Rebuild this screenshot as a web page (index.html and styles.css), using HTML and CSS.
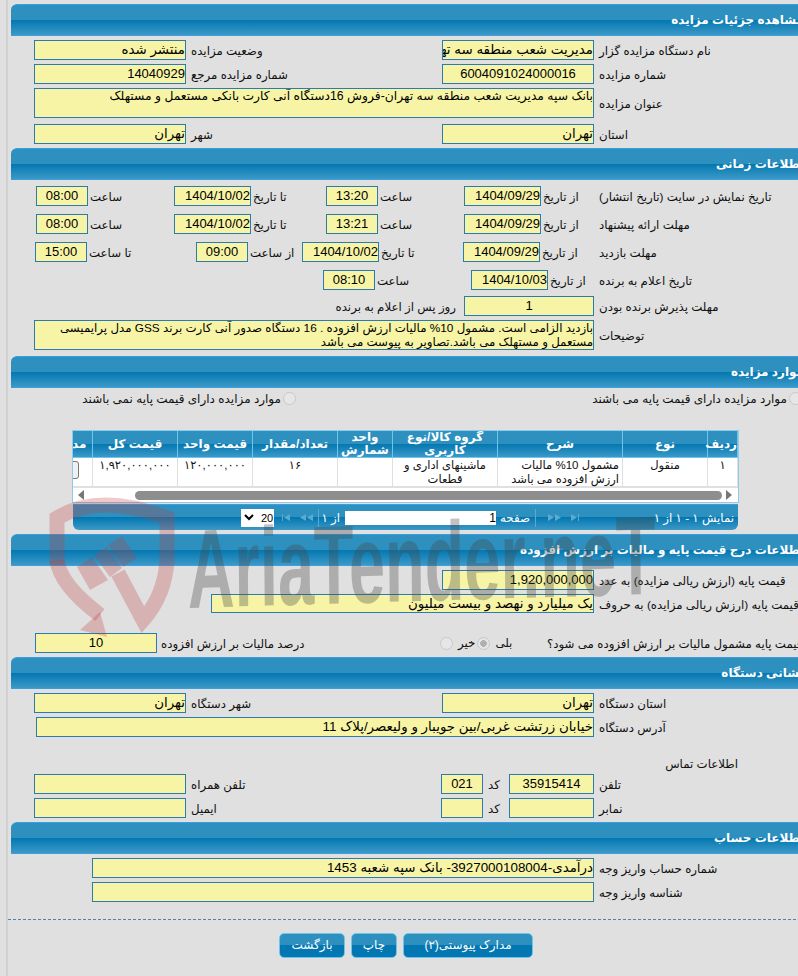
FILE: index.html
```html
<!DOCTYPE html>
<html lang="fa" dir="rtl">
<head>
    <meta charset="UTF-8">
    <meta name="viewport" content="width=device-width, initial-scale=1.0">
    <title>مشاهده جزئیات مزایده</title>
    <link rel="stylesheet" href="styles.css">
</head>
<body>
    <div class="page">
        <h2 class="sec-head">مشاهده جزئیات مزایده</h2>
        <div class="sec-body pad-4">
            <div class="row row-2">
                <div class="box">منتشر شده</div><div class="lbl">وضعیت مزایده</div>
                <div class="box">مدیریت شعب منطقه سه تهران</div><div class="lbl">نام دستگاه مزایده گزار</div>
            </div>
            <div class="row row-2">
                <div class="box num">14040929</div><div class="lbl">شماره مزایده مرجع</div>
                <div class="box num center">6004091024000016</div><div class="lbl">شماره مزایده</div>
            </div>
            <div class="row row-single from-34">
                <div class="box tall">بانک سپه مدیریت شعب منطقه سه تهران-فروش 16دستگاه آنی کارت بانکی مستعمل و مستهلک</div><div class="lbl">عنوان مزایده</div>
            </div>
            <div class="row row-2 mt-6">
                <div class="box">تهران</div><div class="lbl">شهر</div>
                <div class="box">تهران</div><div class="lbl">استان</div>
            </div>
        </div>

        <h2 class="sec-head">اطلاعات زمانی</h2>
        <div class="sec-body pad-6">
            <div class="row row-time">
                <div class="box num center">08:00</div><div class="lbl">ساعت</div>
                <div class="box num">1404/10/02</div><div class="lbl">تا تاریخ</div>
                <div class="box num center">13:20</div><div class="lbl">ساعت</div>
                <div class="box num">1404/09/29</div><div class="lbl">از تاریخ</div>
                <div class="lbl">تاریخ نمایش در سایت (تاریخ انتشار)</div>
            </div>
            <div class="row row-time mt-8">
                <div class="box num center">08:00</div><div class="lbl">ساعت</div>
                <div class="box num">1404/10/02</div><div class="lbl">تا تاریخ</div>
                <div class="box num center">13:21</div><div class="lbl">ساعت</div>
                <div class="box num">1404/09/29</div><div class="lbl">از تاریخ</div>
                <div class="lbl">مهلت ارائه پیشنهاد</div>
            </div>
            <div class="row row-visit mt-8">
                <div class="box num center">15:00</div><div class="lbl">تا ساعت</div>
                <div class="box num center">09:00</div><div class="lbl">از ساعت</div>
                <div class="box num">1404/10/02</div><div class="lbl">تا تاریخ</div>
                <div class="box num">1404/09/29</div><div class="lbl">از تاریخ</div>
                <div class="lbl">مهلت بازدید</div>
            </div>
            <div class="row row-winner mt-8">
                <div class="box num center">08:10</div><div class="lbl">ساعت</div>
                <div class="box num">1404/10/03</div><div class="lbl">از تاریخ</div>
                <div class="lbl">تاریخ اعلام به برنده</div>
            </div>
            <div class="row row-accept mt-6">
                <div class="lbl to-right">روز پس از اعلام به برنده</div>
                <div class="box num center">1</div>
                <div class="lbl">مهلت پذیرش برنده بودن</div>
            </div>
            <div class="row row-single from-34 mt-4">
                <div class="box tall notes">بازدید الزامی است. مشمول 10% مالیات ارزش افزوده . 16 دستگاه صدور آنی کارت برند GSS مدل پرایمیسی<br>مستعمل و مستهلک می باشد.تصاویر به پیوست می باشد</div><div class="lbl">توضیحات</div>
            </div>
        </div>

        <h2 class="sec-head">موارد مزایده</h2>
        <div class="sec-body pad-4">
            <div class="row-radios">
                <div class="radio-opt"><span>موارد مزایده دارای قیمت پایه نمی باشند</span><i class="radio"></i></div>
                <div class="radio-opt"><span>موارد مزایده دارای قیمت پایه می باشند</span><i class="radio"></i></div>
            </div>
            <div class="grid-box">
                <div class="grid-wrap">
                    <table class="grid">
                        <thead>
                            <tr>
                                <th>ردیف</th><th>نوع</th><th>شرح</th><th>گروه کالا/نوع کاربری</th><th>واحد شمارش</th><th>تعداد/مقدار</th><th>قیمت واحد</th><th>قیمت کل</th><th>مدارک</th>
                            </tr>
                        </thead>
                        <tbody>
                            <tr>
                                <td>۱</td><td>منقول</td><td class="desc">مشمول 10% مالیات ارزش افزوده می باشد</td><td>ماشینهای اداری و قطعات</td><td></td><td>۱۶</td><td>۱۲۰,۰۰۰,۰۰۰</td><td>۱,۹۲۰,۰۰۰,۰۰۰</td><td><span class="mini-btn">جزئیات</span></td>
                            </tr>
                        </tbody>
                    </table>
                </div>
                <div class="hscroll">
                    <svg class="arrow" width="6" height="10" viewBox="0 0 6 10"><polygon points="6,0 6,10 0,5"/></svg>
                    <div class="thumb"></div>
                    <svg class="arrow" width="6" height="10" viewBox="0 0 6 10"><polygon points="0,0 0,10 6,5"/></svg>
                </div>
            </div>
            <div class="pager">
                <div class="page-size">
                    <svg width="10" height="7" viewBox="0 0 10 7"><path d="M1 1l4 4 4-4" fill="none" stroke="#000" stroke-width="2"/></svg>
                    <span>20</span>
                </div>
                <svg class="pg-icon" width="12" height="7" viewBox="0 0 12 7"><path d="M1 0v7h1V0zM9 0v7L3 3.500z"/></svg>
                <svg class="pg-icon" width="13" height="7" viewBox="0 0 13 7"><path d="M6 0v7L0 3.500zM13 0v7L7 3.500z"/></svg>
                <span class="pg-sep"></span>
                <span class="pg-text of">از ۱</span>
                <div class="pg-input">1</div>
                <span class="pg-text">صفحه</span>
                <span class="pg-sep"></span>
                <svg class="pg-icon" width="13" height="7" viewBox="0 0 13 7"><path d="M0 0v7l6-3.500zM7 0v7l6-3.500z"/></svg>
                <svg class="pg-icon" width="12" height="7" viewBox="0 0 12 7"><path d="M3 0v7l6-3.500zM10 0v7h1V0z"/></svg>
                <span class="pg-text pg-info">نمایش ۱ - ۱ از ۱</span>
            </div>
        </div>

        <h2 class="sec-head">اطلاعات درج قیمت پایه و مالیات بر ارزش افزوده</h2>
        <div class="sec-body pad-4">
            <div class="row row-single from-442">
                <div class="box num">1,920,000,000</div><div class="lbl">قیمت پایه (ارزش ریالی مزایده) به عدد</div>
            </div>
            <div class="row row-single from-211 short">
                <div class="box">یک میلیارد و نهصد و بیست میلیون</div><div class="lbl">قیمت پایه (ارزش ریالی مزایده) به حروف</div>
            </div>
            <div class="row row-tax">
                <div class="box num center">10</div>
                <div class="lbl">درصد مالیات بر ارزش افزوده</div>
                <div class="tax-radios">
                    <i class="radio"></i><span>خیر</span><i class="radio on"></i><span>بلی</span>
                </div>
                <div class="lbl">قیمت پایه مشمول مالیات بر ارزش افزوده می شود؟</div>
            </div>
        </div>

        <h2 class="sec-head">نشانی دستگاه</h2>
        <div class="sec-body pad-4">
            <div class="row row-2">
                <div class="box">تهران</div><div class="lbl">شهر دستگاه</div>
                <div class="box">تهران</div><div class="lbl">استان دستگاه</div>
            </div>
            <div class="row row-single from-36">
                <div class="box">خیابان زرتشت غربی/بین جویبار و ولیعصر/پلاک 11</div><div class="lbl">آدرس دستگاه</div>
            </div>
            <div class="contact-title">اطلاعات تماس</div>
            <div class="row row-contact">
                <div class="box"></div><div class="lbl">تلفن همراه</div>
                <div class="box num center">021</div><div class="lbl">کد</div>
                <div class="box num center">35915414</div><div class="lbl">تلفن</div>
            </div>
            <div class="row row-contact">
                <div class="box"></div><div class="lbl">ایمیل</div>
                <div class="box"></div><div class="lbl">کد</div>
                <div class="box"></div><div class="lbl">نمابر</div>
            </div>
        </div>

        <h2 class="sec-head">اطلاعات حساب</h2>
        <div class="sec-body pad-4">
            <div class="row row-single from-92">
                <div class="box">درآمدی-3927000108004- بانک سپه شعبه 1453</div><div class="lbl">شماره حساب واریز وجه</div>
            </div>
            <div class="row row-single from-92">
                <div class="box"></div><div class="lbl">شناسه واریز وجه</div>
            </div>
        </div>

        <div class="actions">
            <a class="btn btn-back">بازگشت</a>
            <a class="btn btn-print">چاپ</a>
            <a class="btn btn-docs">مدارک پیوستی(۲)</a>
        </div>
    </div>

    <!-- watermark sits over the whole form -->
    <div class="watermark">
        <svg class="wm-logo" width="150" height="150" viewBox="0 0 150 150">
            <path class="wm-band" d="M17 75V28Q60 2 127 28V70Q125 105 103 130L78 83"/>
            <path class="wm-band" d="M17 70Q20 95 60 125"/>
            <polygon class="wm-fill" points="60,122 67,147 40,140"/>
            <polygon class="wm-fill" points="37,77 52,67 68,90 50,100"/>
            <polygon class="wm-fill" points="54,65 67,57 82,78 70,87"/>
            <polygon class="wm-fill" points="68,55 82,46 97,68 83,77"/>
        </svg>
        <span class="wm-text">AriaTender.neT</span>
    </div>
</body>
</html>
```

FILE: styles.css
```css
:root {
    --bg: #e0e0e0;
    --box: #f7f5a5;
    --box-border: #2a7cb0;
    --head-top: #2e90bf;
    --head-mid: #0377b1;
    --head-end: #3c99c7;
    --head-line: #3a9ee0;
    --light-line: #6cc5ec;
}

html {
    overflow: hidden;
}

body {
    direction: ltr;
    margin: 0;
    height: 976px;
    overflow: hidden;
    position: relative;
    background: var(--bg);
    color: #111;
    font-family: "Liberation Sans", "DejaVu Sans", sans-serif;
    font-size: 11.8px;
}

.page {
    box-sizing: border-box;
    width: 805px;
    min-height: 976px;
    margin-left: 6px;
    padding: 4px 0 0 3px;
    border-left: 2px solid #d0d0d0;
}

.sec-head {
    direction: rtl;
    height: 32px;
    box-sizing: border-box;
    margin: 0;
    padding: 0 7px 0 0;
    border-top: 1px solid var(--head-line);
    border-bottom: 1px solid var(--head-line);
    border-radius: 6px 6px 0 0;
    background: linear-gradient(var(--head-top) 50%, var(--head-mid) 50%, var(--head-end));
    color: #fff;
    font-size: 12px;
    font-weight: bold;
    line-height: 30px;
    white-space: nowrap;
}

.sec-body {
    padding-bottom: 4px;
}

.pad-4 { padding-top: 4px; }
.pad-6 { padding-top: 6px; padding-bottom: 6px; }
.mt-4 { margin-top: 4px !important; }
.mt-6 { margin-top: 6px !important; }
.mt-8 { margin-top: 8px !important; }

.row {
    display: grid;
    align-items: center;
    height: 20px;
    white-space: nowrap;
}

.row + .row {
    margin-top: 4px;
}

.box {
    direction: rtl;
    box-sizing: border-box;
    height: 20px;
    overflow: hidden;
    border: 1px solid var(--box-border);
    background: var(--box);
    color: #000;
    font-size: 13.4px;
    line-height: 18px;
    white-space: nowrap;
}

.box.num {
    font-size: 13px;
}

.box.center {
    text-align: center;
}

.box.tall {
    height: 30px;
    font-size: 12.3px;
    line-height: 14px;
}

.box.notes {
    font-size: 11.8px;
}

.row:has(.tall) {
    height: 30px;
}

.lbl {
    direction: rtl;
    padding: 2px 0 0 5px;
    text-align: left;
    white-space: nowrap;
}

.lbl.to-right {
    padding: 2px 8px 0 0;
    text-align: right;
}

.row-2 {
    grid-template-columns: 152px 256px 152px 1fr;
    padding-left: 23px;
}

.row-single {
    grid-template-columns: 1fr 217px;
}

.row-single.short,
.row-single.short .box {
    height: 19px;
}

.row-single.short .box {
    line-height: 17px;
}

.from-34 { padding-left: 23px; }
.from-36 { padding-left: 25px; }
.from-92 { padding-left: 81px; }
.from-211 { padding-left: 200px; }
.from-442 { padding-left: 431px; }

.row-time {
    grid-template-columns: 52px 86px 77px 75px 52px 86px 77px 58px 1fr;
    padding-left: 25px;
}

.row-time .lbl,
.row-visit .lbl,
.row-winner .lbl {
    padding-left: 2px;
}

.row-time .lbl:last-child,
.row-visit .lbl:last-child,
.row-winner .lbl:last-child {
    padding-left: 0;
}

.row-visit {
    grid-template-columns: 52px 109px 52px 54px 77px 84px 77px 59px 1fr;
    padding-left: 24px;
}

.row-winner {
    grid-template-columns: 52px 96px 77px 51px 1fr;
    padding-left: 312px;
}

.row-accept {
    grid-template-columns: 453px 130px 1fr;
}

.row-radios {
    display: grid;
    grid-template-columns: 285px 506px;
    height: 38px;
    font-size: 12px;
}

.radio-opt {
    display: flex;
    justify-content: flex-end;
    gap: 2px;
    height: 14px;
    line-height: 15px;
    white-space: nowrap;
}

.radio-opt span {
    direction: rtl;
}

.radio {
    display: inline-block;
    flex: none;
    box-sizing: border-box;
    width: 13px;
    height: 13px;
    border: 1px solid #c8c8c8;
    border-radius: 50%;
    background: #e6e6e6;
}

.radio.on {
    background: radial-gradient(#b0b0b0 40%, #e6e6e6 45%);
}

.grid-box {
    width: 667px;
    box-sizing: border-box;
    margin-left: 61px;
    border: 1px solid #8ccbee;
    background: #fff;
}

.grid-wrap {
    direction: rtl;
    overflow: hidden;
}

.grid {
    table-layout: fixed;
    width: 695px;
    border-collapse: collapse;
}

.grid th {
    box-sizing: border-box;
    height: 26px;
    padding: 0;
    border: 1px solid var(--light-line);
    border-top: 0;
    background: linear-gradient(var(--head-top) 50%, var(--head-mid) 50%, var(--head-end));
    color: #fff;
    font-size: 12px;
    font-weight: bold;
    line-height: 13px;
}

.grid td {
    height: 28px;
    padding: 0 2px;
    box-sizing: border-box;
    border: 1px solid #e0e0e0;
    border-top: 0;
    font-size: 11.5px;
    line-height: 14px;
    text-align: center;
    vertical-align: top;
}

.grid th:nth-child(1) { width: 30px; }
.grid th:nth-child(2) { width: 85px; }
.grid th:nth-child(3) { width: 125px; }
.grid th:nth-child(4) { width: 105px; }
.grid th:nth-child(5) { width: 55px; }
.grid th:nth-child(6) { width: 85px; }
.grid th:nth-child(7) { width: 75px; }
.grid th:nth-child(8) { width: 85px; }
.grid th:nth-child(9) { width: 50px; }

.grid td.desc {
    padding-right: 3px;
    text-align: right;
}

.mini-btn {
    display: block;
    box-sizing: border-box;
    width: 46px;
    height: 18px;
    margin: 3px 11px 0 0;
    border: 1px solid #777;
    border-radius: 3px;
    background: #f0f0f0;
    line-height: 16px;
    white-space: nowrap;
}

.hscroll {
    display: flex;
    align-items: center;
    gap: 4px;
    box-sizing: border-box;
    height: 15px;
    padding: 0 6px 0 5px;
    border-top: 1px solid #e0e0e0;
}

.arrow {
    flex: none;
    fill: #777;
}

.thumb {
    height: 9px;
    margin: 0 0 0 47px;
    flex: 1;
    border-radius: 5px;
    background: #8e8e8e;
}

.pager {
    display: flex;
    align-items: center;
    box-sizing: border-box;
    width: 665px;
    height: 26px;
    margin: 1px 0 0 62px;
    padding-left: 168px;
    border-top: 1px solid var(--head-line);
    border-radius: 0 0 6px 6px;
    background: linear-gradient(var(--head-top) 50%, var(--head-mid) 50%, var(--head-end));
    color: #fff;
}

.page-size {
    display: flex;
    align-items: center;
    gap: 7px;
    box-sizing: border-box;
    width: 33px;
    height: 18px;
    padding-left: 3px;
    background: #fff;
    color: #000;
    font-size: 11px;
}

.pg-icon {
    flex: none;
    margin-left: 7px;
    fill: #5aaad2;
}

.pg-sep {
    width: 1px;
    height: 18px;
    margin: 0 5px;
    background: #5aaad2;
}

.pg-text {
    direction: rtl;
    white-space: nowrap;
}

.pg-text.of {
    width: 16px;
    margin-right: 5px;
}

.pg-input {
    direction: rtl;
    box-sizing: border-box;
    width: 151px;
    height: 14px;
    margin-right: 4px;
    background: #fff;
    color: #000;
    font-size: 12px;
    line-height: 14px;
}

.pg-info {
    margin-left: auto;
    margin-right: 4px;
}

.row-tax {
    grid-template-columns: 122px 283px 107px 1fr;
    padding-left: 24px;
    margin-top: 20px !important;
}

.row-tax .lbl {
    padding-left: 4px;
}

.row-tax .lbl:last-child {
    padding-left: 0;
}

.tax-radios {
    display: flex;
    align-items: center;
}

.tax-radios span {
    direction: rtl;
    margin: 0 2px 0 5px;
}

.contact-title {
    direction: rtl;
    width: 72px;
    height: 17px;
    margin: 19px 0 1px 655px;
    line-height: 17px;
    white-space: nowrap;
    text-align: left;
}

.row-contact {
    grid-template-columns: 152px 255px 42px 26px 85px 1fr;
    padding-left: 23px;
}

.actions {
    display: flex;
    justify-content: flex-start;
    gap: 6px;
    margin: 13px 0 0 -3px;
    padding: 13px 0 0 271px;
    border-top: 1px dashed #4a86ad;
}

.btn {
    direction: rtl;
    box-sizing: border-box;
    height: 25px;
    border: 1px solid var(--light-line);
    border-radius: 5px;
    background: linear-gradient(var(--head-top) 50%, var(--head-mid) 50%, var(--head-mid));
    color: #fff;
    font-size: 12px;
    line-height: 23px;
    text-align: center;
    white-space: nowrap;
}

.btn-back { width: 66px; }
.btn-print { width: 46px; }
.btn-docs { width: 130px; }

.watermark {
    position: absolute;
    left: 40px;
    top: 490px;
    width: 640px;
    height: 150px;
    direction: ltr;
    pointer-events: none;
}

.wm-logo {
    position: absolute;
    left: 0;
    top: 0;
}

.wm-band {
    fill: none;
    stroke: rgba(190, 60, 60, 0.28);
    stroke-width: 15;
}

.wm-fill {
    fill: rgba(190, 60, 60, 0.28);
}

.wm-text {
    position: absolute;
    left: 147px;
    top: 24px;
    color: rgba(70, 70, 70, 0.33);
    font-family: "Liberation Sans", sans-serif;
    font-size: 112px;
    font-weight: bold;
    line-height: 112px;
    white-space: nowrap;
    transform-origin: left top;
    transform: scaleX(0.58) rotate(-1deg);
}
```
